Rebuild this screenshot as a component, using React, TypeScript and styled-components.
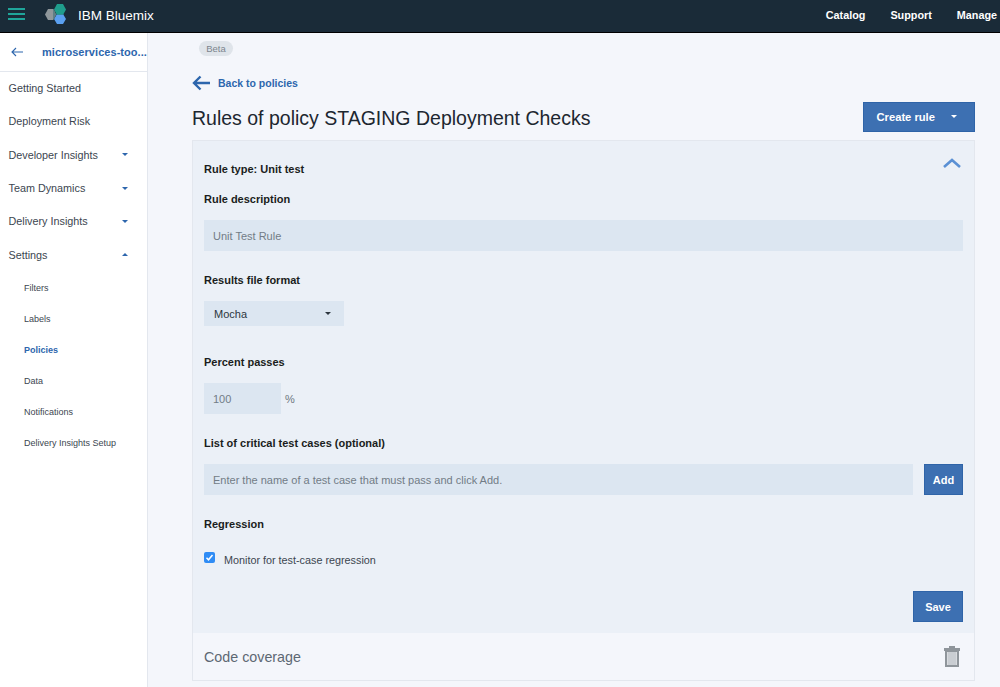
import * as React from "react";
import styled, { createGlobalStyle } from "styled-components";

const colors = {
  bar: "#1a2b38",
  page: "#f4f6fb",
  panel: "#ebf0f7",
  field: "#dce6f1",
  line: "#e3e7ee",
  blue: "#3d70b2",
  link: "#2d66ad",
  text: "#3a3a3a",
  strong: "#1a1d20",
};

const GlobalStyle = createGlobalStyle`
  html, body {
    margin: 0;
    height: 100%;
    overflow: hidden;
    background: ${colors.page};
    font-family: "Liberation Sans", Arial, sans-serif;
    color: ${colors.text};
  }
  * { box-sizing: border-box; }
`;

const Shell = styled.div`
  width: 1000px;
  height: 687px;
  display: flex;
  flex-direction: column;
  overflow: hidden;
`;

const TopBar = styled.header`
  height: 33px;
  flex: none;
  display: flex;
  align-items: center;
  background: ${colors.bar};
  border-bottom: 1px solid #000;
  padding: 0 3px 2px 8px;
`;

const Burger = styled.div`
  width: 17px;
  height: 12px;
  margin-top: -2px;
  display: flex;
  flex-direction: column;
  justify-content: space-between;
  span {
    height: 2px;
    background: #1fa59a;
  }
`;

const Brand = styled.div`
  margin-left: 12px;
  font-size: 13.5px;
  color: #fff;
`;

const TopNav = styled.nav`
  margin-left: auto;
  display: flex;
  gap: 25px;
  font-size: 10.8px;
  font-weight: 700;
  color: #fff;
`;

const Body = styled.div`
  flex: 1;
  display: flex;
  min-height: 0;
`;

const Sidebar = styled.aside`
  width: 148px;
  flex: none;
  background: #fff;
  border-right: 1px solid ${colors.line};
`;

const SideHead = styled.div`
  height: 38.5px;
  display: flex;
  align-items: center;
  padding-left: 11px;
  border-bottom: 1px solid ${colors.line};
  font-size: 11px;
  font-weight: 700;
  color: ${colors.link};
  letter-spacing: 0.05px;
  svg {
    flex: none;
  }
  span {
    margin-left: 19px;
    white-space: nowrap;
  }
`;

const SideItem = styled.div`
  height: 33.3px;
  display: flex;
  align-items: center;
  justify-content: space-between;
  padding: 0 19px 0 8.5px;
  font-size: 10.8px;
  color: #3c4650;
`;

const SubList = styled.div`
  padding-top: 0.7px;
`;

const SubItem = styled.div<{ $active?: boolean }>`
  height: 31.1px;
  display: flex;
  align-items: center;
  padding-left: 24px;
  font-size: 9px;
  font-weight: ${(p) => (p.$active ? 700 : 400)};
  color: ${(p) => (p.$active ? colors.link : "#3c4650")};
`;

const Caret = styled.i<{ $up?: boolean; $color?: string; $size?: number }>`
  display: block;
  width: 0;
  height: 0;
  border-left: ${(p) => p.$size ?? 3}px solid transparent;
  border-right: ${(p) => p.$size ?? 3}px solid transparent;
  ${(p) => (p.$up ? "border-bottom" : "border-top")}: ${(p) => p.$size ?? 3}px solid ${(p) => p.$color ?? colors.link};
`;

const Main = styled.main`
  flex: 1;
  padding: 8px 25px 0 44px;
  min-width: 0;
`;

const Badge = styled.div`
  width: 34px;
  height: 15px;
  margin-left: 7px;
  border-radius: 8px;
  background: #dfe4ea;
  color: #7c858e;
  font-size: 9.5px;
  line-height: 15px;
  text-align: center;
`;

const BackLink = styled.div`
  margin-top: 17px;
  height: 20px;
  display: flex;
  align-items: center;
  gap: 8px;
  font-size: 10.5px;
  font-weight: 700;
  color: ${colors.link};
`;

const TitleRow = styled.div`
  margin-top: 8px;
  height: 31px;
  display: flex;
  align-items: center;
  justify-content: space-between;
`;

const Title = styled.h1`
  margin: 0;
  padding-top: 3px;
  font-size: 19.5px;
  font-weight: 400;
  color: #1d2730;
`;

const Button = styled.button`
  background: ${colors.blue};
  border: 1px solid #2f64a8;
  color: #fff;
  font-family: inherit;
  font-size: 11px;
  font-weight: 700;
  padding: 0;
  height: 31px;
`;

const CreateButton = styled(Button)`
  width: 112px;
  height: 30px;
  display: flex;
  align-items: center;
  padding-left: 12.5px;
  gap: 16px;
  font-size: 11.2px;
`;

const Panel = styled.section`
  margin-top: 8px;
  width: 783px;
  height: 541px;
  border: 1px solid ${colors.line};
  display: flex;
  flex-direction: column;
`;

const Expanded = styled.div`
  height: 492px;
  flex: none;
  background: ${colors.panel};
  padding: 0 11px;
`;

const RuleHead = styled.div`
  height: 48px;
  padding-top: 8px;
  display: flex;
  align-items: center;
  justify-content: space-between;
  position: relative;
`;

const Chevron = styled.svg`
  position: absolute;
  right: 2px;
  top: 17px;
`;

const Label = styled.div<{ $top?: number }>`
  margin-top: ${(p) => p.$top ?? 0}px;
  height: 20px;
  line-height: 20px;
  font-size: 11px;
  font-weight: 700;
  color: ${colors.strong};
`;

const Field = styled.div<{ $width?: number; $grow?: boolean }>`
  height: 31px;
  width: ${(p) => (p.$grow ? "auto" : p.$width ? `${p.$width}px` : "100%")};
  flex: ${(p) => (p.$grow ? 1 : "none")};
  background: ${colors.field};
  display: flex;
  align-items: center;
  padding-left: 9px;
  font-size: 11px;
  color: #727c86;
`;

const SelectBox = styled.div`
  width: 140px;
  height: 25px;
  margin-top: 11px;
  background: ${colors.field};
  display: flex;
  align-items: center;
  justify-content: space-between;
  padding: 0 13px 0 10px;
  font-size: 11px;
  color: #2d3640;
`;

const Inline = styled.div<{ $gap: number; $top: number }>`
  margin-top: ${(p) => p.$top}px;
  display: flex;
  align-items: center;
  gap: ${(p) => p.$gap}px;
`;

const Unit = styled.span`
  font-size: 11px;
  color: #6e7780;
`;

const AddButton = styled(Button)`
  width: 39px;
`;

const CheckRow = styled.div`
  margin-top: 16px;
  height: 14px;
  display: flex;
  align-items: center;
  gap: 9px;
  font-size: 10.8px;
  color: #3c4650;
  span:last-child {
    padding-top: 5px;
  }
`;

const Check = styled.span`
  width: 11px;
  height: 11px;
  border-radius: 2px;
  background: #2f8cf5;
  display: flex;
  align-items: center;
  justify-content: center;
`;

const SaveRow = styled.div`
  margin-top: 27px;
  display: flex;
  justify-content: flex-end;
`;

const SaveButton = styled(Button)`
  width: 50px;
  height: 31px;
`;

const Collapsed = styled.div`
  flex: 1;
  display: flex;
  align-items: center;
  justify-content: space-between;
  padding: 0 14px 0 11px;
  font-size: 14.3px;
  color: #5d6873;
`;

const sideItems = ["Getting Started", "Deployment Risk"];
const expandable = ["Developer Insights", "Team Dynamics", "Delivery Insights"];

function Logo() {
  return (
    <svg width="21" height="20" viewBox="0 0 21 20" style={{ marginLeft: 20, marginTop: -2, flex: "none" }}>
      <polygon points="3,5 8,5 11,10.5 8,16 3,16 0,10.5" fill="#8f979b" />
      <polygon points="12,0 18,0 21,5.5 18,11 12,11 9,5.5" fill="#1f9d8c" />
      <polygon points="12,10 18,10 21,15 18,20 12,20 9,15" fill="#5aa0f0" />
      <polygon points="9,5.5 11,10.5 9,15 8,16 8,5" fill="#5f7f86" />
      <polygon points="12,10 18,10 18,11 12,11" fill="#2f8f9a" />
    </svg>
  );
}

function Trash() {
  return (
    <svg width="16" height="21" viewBox="0 0 16 21">
      <rect x="5" y="0" width="6" height="2" fill="#8f959b" />
      <rect x="0" y="2" width="16" height="3" fill="#8f959b" />
      <rect x="1" y="5" width="14" height="16" fill="#8f959b" />
      <rect x="3" y="6" width="10" height="13" fill="#d8dbdf" />
      <path d="M5 6v13M7 6v13M9 6v13M11 6v13" stroke="#b4b9be" strokeWidth="0.8" />
    </svg>
  );
}

export default function App() {
  return (
    <Shell>
      <GlobalStyle />
      <TopBar>
        <Burger>
          <span />
          <span />
          <span />
        </Burger>
        <Logo />
        <Brand>IBM Bluemix</Brand>
        <TopNav>
          <span>Catalog</span>
          <span>Support</span>
          <span>Manage</span>
        </TopNav>
      </TopBar>
      <Body>
        <Sidebar>
          <SideHead>
            <svg width="12" height="10" viewBox="0 0 12 10">
              <path d="M12 5H1M5 1L1 5l4 4" fill="none" stroke={colors.link} strokeWidth="1.1" />
            </svg>
            <span>microservices-too...</span>
          </SideHead>
          {sideItems.map((item) => (
            <SideItem key={item}>{item}</SideItem>
          ))}
          {expandable.map((item) => (
            <SideItem key={item}>
              {item}
              <Caret />
            </SideItem>
          ))}
          <SideItem>
            Settings
            <Caret $up />
          </SideItem>
          <SubList>
            <SubItem>Filters</SubItem>
            <SubItem>Labels</SubItem>
            <SubItem $active>Policies</SubItem>
            <SubItem>Data</SubItem>
            <SubItem>Notifications</SubItem>
            <SubItem>Delivery Insights Setup</SubItem>
          </SubList>
        </Sidebar>
        <Main>
          <Badge>Beta</Badge>
          <BackLink>
            <svg width="18" height="16" viewBox="0 0 18 16">
              <path d="M18 8H2M8.5 1.5L2 8l6.5 6.5" fill="none" stroke={colors.link} strokeWidth="2.4" />
            </svg>
            Back to policies
          </BackLink>
          <TitleRow>
            <Title>Rules of policy STAGING Deployment Checks</Title>
            <CreateButton>
              Create rule
              <Caret $color="#fff" />
            </CreateButton>
          </TitleRow>
          <Panel>
            <Expanded>
              <RuleHead>
                <Label>Rule type: Unit test</Label>
                <Chevron width="18" height="10" viewBox="0 0 18 10">
                  <path d="M1 9l8-7 8 7" fill="none" stroke="#5a90d4" strokeWidth="2.6" />
                </Chevron>
              </RuleHead>
              <Label>Rule description</Label>
              <Inline $gap={0} $top={11}>
                <Field>Unit Test Rule</Field>
              </Inline>
              <Label $top={19}>Results file format</Label>
              <SelectBox>
                Mocha
                <Caret $color="#2d3640" />
              </SelectBox>
              <Label $top={26}>Percent passes</Label>
              <Inline $gap={4} $top={11}>
                <Field $width={77}>100</Field>
                <Unit>%</Unit>
              </Inline>
              <Label $top={19}>List of critical test cases (optional)</Label>
              <Inline $gap={11} $top={11}>
                <Field $grow>Enter the name of a test case that must pass and click Add.</Field>
                <AddButton>Add</AddButton>
              </Inline>
              <Label $top={19}>Regression</Label>
              <CheckRow>
                <Check>
                  <svg width="9" height="9" viewBox="0 0 9 9">
                    <path d="M1.5 4.8l2 2L7.5 2" fill="none" stroke="#fff" strokeWidth="1.5" />
                  </svg>
                </Check>
                <span>Monitor for test-case regression</span>
              </CheckRow>
              <SaveRow>
                <SaveButton>Save</SaveButton>
              </SaveRow>
            </Expanded>
            <Collapsed>
              Code coverage
              <Trash />
            </Collapsed>
          </Panel>
        </Main>
      </Body>
    </Shell>
  );
}
